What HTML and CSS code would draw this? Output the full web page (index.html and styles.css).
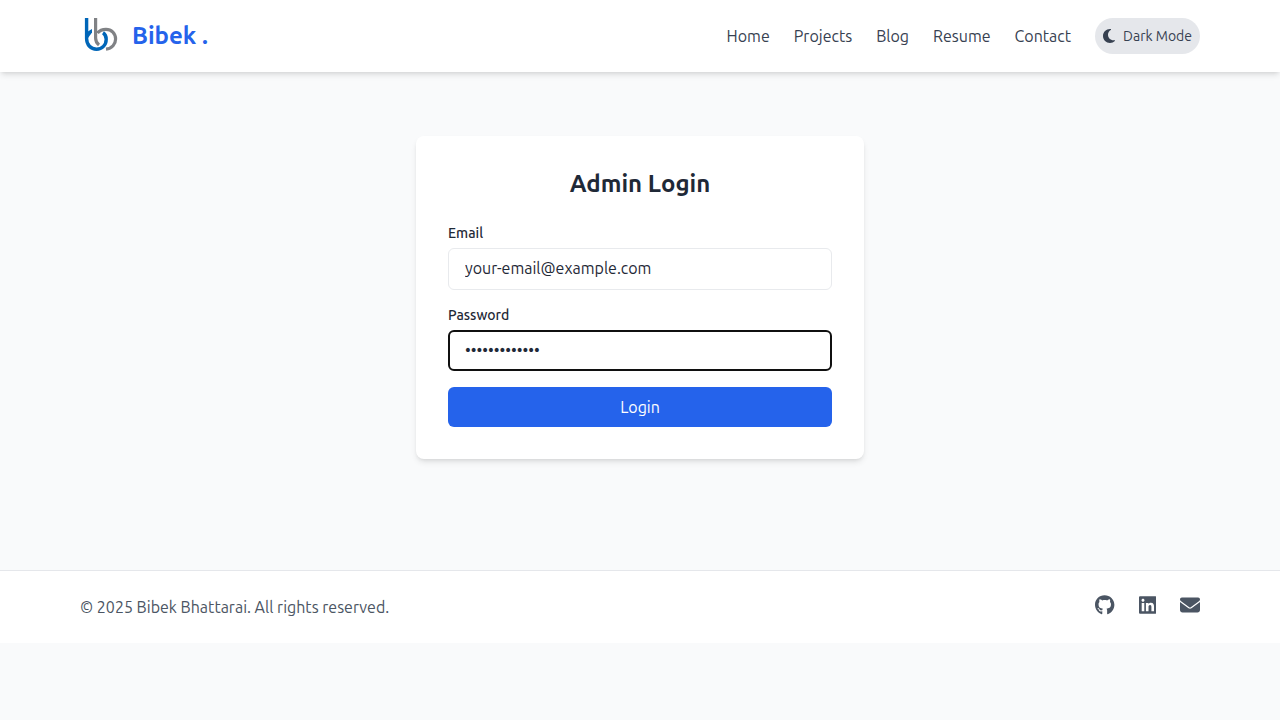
FILE: index.html
```html
<!DOCTYPE html>
<html lang="en">
<head>
<meta charset="utf-8">
<meta name="viewport" content="width=device-width, initial-scale=1">
<title>Admin Login</title>
<link rel="stylesheet" href="styles.css">
</head>
<body>
<header class="site-header">
  <div class="container header-row">
    <a class="brand" href="#">
      <svg class="brand-logo" viewBox="0 0 40 40" fill="none" stroke-width="3.200" aria-hidden="true">
        <path stroke="#808285" d="M15.600 2v20c0 3 .8 5 3.400 7M17.500 17c2-2.500 5-3.700 8.500-3.700 5.500 0 9.600 4.200 9.600 9.700 0 5-3.600 9.500-9.600 10.200"/>
        <path stroke="#0066b8" stroke-width="3.400" d="M6.600 2v20.500c0 6.500 4.300 10.700 9.900 10.700s9.700-4.200 9.700-10c0-2.800-1.200-5.200-3.200-6.500"/>
        <path fill="#0066b8" d="M7 16l5-3v3.500l-4 5.500z"/>
      </svg>
      <span class="brand-name">Bibek .</span>
    </a>
    <nav class="nav">
      <a href="#">Home</a>
      <a href="#">Projects</a>
      <a href="#">Blog</a>
      <a href="#">Resume</a>
      <a href="#">Contact</a>
      <button class="theme-toggle" type="button">
        <svg class="moon" viewBox="0 0 384 512" aria-hidden="true"><path fill="currentColor" d="M223.500 32C100 32 0 132.300 0 256s100 224 223.500 224c60.600 0 115.500-24.200 155.800-63.400 5-4.900 6.300-12.500 3.100-18.700s-10.100-9.700-17-8.500c-9.800 1.700-19.800 2.600-30.100 2.600-96.900 0-175.500-78.800-175.500-176 0-65.800 36-123.100 89.300-153.300 6.100-3.500 9.200-10.500 7.700-17.300s-7.300-11.900-14.300-12.500c-6.300-.5-12.600-.8-19-.8z"/></svg>
        <span>Dark Mode</span>
      </button>
    </nav>
  </div>
</header>

<main class="main">
  <section class="card">
    <h1 class="card-title">Admin Login</h1>
    <form class="form">
      <div class="field">
        <label for="email">Email</label>
        <input id="email" type="email" value="your-email@example.com">
      </div>
      <div class="field">
        <label for="password">Password</label>
        <input id="password" class="is-active" type="password" value="your-password">
      </div>
      <button class="submit" type="submit">Login</button>
    </form>
  </section>
</main>

<footer class="site-footer">
  <div class="container footer-row">
    <p class="copyright">© 2025 Bibek Bhattarai. All rights reserved.</p>
    <div class="social">
      <a href="#" aria-label="GitHub"><svg viewBox="0 0 496 512" aria-hidden="true"><path fill="currentColor" d="M165.900 397.400c0 2-2.300 3.600-5.200 3.600-3.300.3-5.600-1.300-5.600-3.600 0-2 2.300-3.600 5.200-3.600 3-.3 5.600 1.300 5.600 3.600zm-31.100-4.500c-.7 2 1.300 4.300 4.300 4.900 2.600 1 5.600 0 6.200-2s-1.300-4.300-4.300-5.200c-2.600-.7-5.500.3-6.200 2.300zm44.200-1.700c-2.900.7-4.900 2.600-4.600 4.900.3 2 2.900 3.300 5.900 2.600 2.900-.7 4.900-2.600 4.600-4.600-.3-1.900-3-3.200-5.900-2.900zM244.800 8C106.100 8 0 113.300 0 252c0 110.900 69.800 205.800 169.500 239.200 12.800 2.300 17.300-5.600 17.300-12.100 0-6.200-.3-40.400-.3-61.400 0 0-70 15-84.700-29.800 0 0-11.400-29.100-27.800-36.600 0 0-22.900-15.700 1.600-15.400 0 0 24.900 2 38.600 25.800 21.900 38.600 58.600 27.500 72.900 20.900 2.300-16 8.800-27.100 16-33.700-55.900-6.200-112.300-14.300-112.300-110.500 0-27.500 7.600-41.300 23.600-58.900-2.600-6.500-11.100-33.300 2.600-67.900 20.900-6.500 69 27 69 27 20-5.600 41.500-8.500 62.800-8.500s42.800 2.900 62.800 8.500c0 0 48.100-33.600 69-27 13.700 34.700 5.200 61.400 2.600 67.900 16 17.700 25.800 31.500 25.800 58.900 0 96.500-58.900 104.200-114.800 110.500 9.200 7.900 17 22.900 17 46.400 0 33.700-.3 75.400-.3 83.600 0 6.500 4.600 14.400 17.300 12.100C428.200 457.800 496 362.900 496 252 496 113.300 383.500 8 244.800 8z"/></svg></a>
      <a href="#" aria-label="LinkedIn"><svg viewBox="0 0 448 512" aria-hidden="true"><path fill="currentColor" d="M416 32H31.900C14.300 32 0 46.500 0 64.300v383.400C0 465.500 14.300 480 31.900 480H416c17.600 0 32-14.500 32-32.300V64.300c0-17.800-14.400-32.300-32-32.300zM135.400 416H69V202.200h66.500V416zm-33.200-243c-21.300 0-38.500-17.300-38.500-38.500S80.900 96 102.200 96c21.200 0 38.500 17.300 38.500 38.500 0 21.300-17.200 38.500-38.500 38.500zm282.100 243h-66.400V312c0-24.800-.5-56.700-34.500-56.700-34.600 0-39.900 27-39.900 54.900V416h-66.400V202.200h63.700v29.200h.9c8.900-16.800 30.600-34.500 62.900-34.500 67.200 0 79.700 44.300 79.700 101.900V416z"/></svg></a>
      <a href="#" aria-label="Email"><svg viewBox="0 0 512 512" aria-hidden="true"><path fill="currentColor" d="M48 64C21.500 64 0 85.500 0 112c0 15.100 7.100 29.300 19.200 38.400L236.800 313.600c11.400 8.500 27 8.500 38.400 0L492.800 150.400C504.900 141.300 512 127.100 512 112c0-26.500-21.500-48-48-48H48zM0 176V384c0 35.300 28.700 64 64 64H448c35.300 0 64-28.700 64-64V176L294.400 339.200c-22.800 17.100-54 17.100-76.800 0L0 176z"/></svg></a>
    </div>
  </div>
</footer>
</body>
</html>
```

FILE: styles.css
```css
*, *::before, *::after { box-sizing: border-box; }

body {
  margin: 0;
  min-height: 100vh;
  background: #f9fafb;
  color: #1f2937;
  font-family: Ubuntu, Roboto, "Noto Sans", sans-serif;
  font-size: 16px;
  line-height: 24px;
}

a { color: inherit; text-decoration: none; }
button, input { font: inherit; }

.container { max-width: 1280px; margin: 0 auto; padding: 0 80px; }

.site-header {
  padding: 16px 0;
  background: #fff;
  box-shadow: 0 4px 6px -1px rgba(0, 0, 0, .1), 0 2px 4px -2px rgba(0, 0, 0, .1);
}
.header-row, .footer-row { display: flex; align-items: center; justify-content: space-between; }
.brand { display: flex; align-items: center; gap: 12px; color: #2563eb; }
.brand-logo { width: 40px; height: 40px; }
.brand-name { font-size: 24px; line-height: 32px; font-weight: 600; }

.nav { display: flex; align-items: center; gap: 24px; color: #374151; }
.theme-toggle {
  display: flex;
  align-items: center;
  gap: 8px;
  padding: 8px;
  border: 0;
  border-radius: 18px;
  background: #e5e7eb;
  color: #374151;
  font-size: 14px;
  line-height: 20px;
}
.moon { width: 12px; height: 16px; }

.main { padding: 64px 16px 111px; }
.card {
  max-width: 448px;
  margin: 0 auto;
  padding: 32px;
  border-radius: 8px;
  background: #fff;
  box-shadow: 0 4px 6px -1px rgba(0, 0, 0, .1), 0 2px 4px -2px rgba(0, 0, 0, .1);
}
.card-title { margin: 0 0 24px; font-size: 24px; line-height: 32px; font-weight: 600; text-align: center; }
.form { display: flex; flex-direction: column; gap: 16px; }
.field { display: flex; flex-direction: column; gap: 6px; }
.field label { font-size: 14px; line-height: 18px; font-weight: 500; }
.field input {
  width: 100%;
  height: 42px;
  padding: 7px 16px 9px;
  border: 1px solid #e8eaed;
  border-radius: 6px;
  background: #fff;
  color: #1f2937;
}
.field .is-active { height: 41px; padding: 6px 15px 8px; border: 2px solid #101010; outline: 0; }
.submit {
  height: 40px;
  border: 0;
  border-radius: 6px;
  background: #2563eb;
  color: #fff;
}

.site-footer { padding: 24px 0; border-top: 1px solid #e5e7eb; background: #fff; }
.footer-row { align-items: flex-start; }
.copyright { margin: 0; color: #4b5563; }
.social { display: flex; gap: 24px; color: #4b5563; }
.social svg { display: block; height: 20px; }
```
